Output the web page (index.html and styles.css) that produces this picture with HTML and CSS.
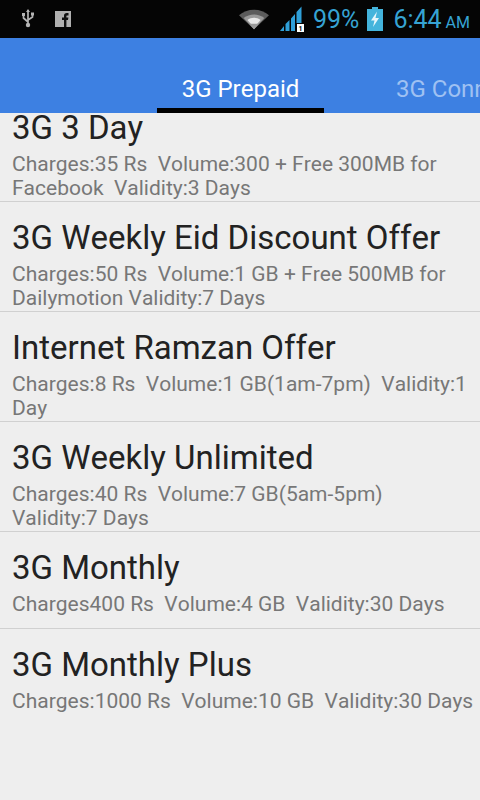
FILE: index.html
```html
<!DOCTYPE html>
<html>
<head>
<meta charset="utf-8">
<link rel="stylesheet" href="styles.css">
</head>
<body>
<div class="status">
  <div class="status-left">
    <svg class="ic-usb" width="16" height="20" viewBox="0 0 16 20"><path d="M8 1 L8 16 M8 13 L3.5 9 L3.5 6.5 M8 11 L12.5 8 L12.5 6" stroke="#b4b4b4" stroke-width="1.7" fill="none"/><circle cx="8" cy="16" r="2.2" fill="#b4b4b4"/><rect x="2" y="4" width="3" height="3" fill="#b4b4b4"/><rect x="11" y="3.5" width="3" height="3" fill="#b4b4b4"/><path d="M6 3 L8 0 L10 3Z" fill="#b4b4b4"/></svg>
    <svg class="ic-fb" width="16" height="16" viewBox="0 0 16 16"><rect width="16" height="16" fill="#b0b0b0"/><path d="M9 16 V9 H7 V6.5 H9 V4.8 C9 3 10 2 11.8 2 H13.5 V4.5 H12.3 C11.6 4.5 11.4 4.8 11.4 5.4 V6.5 H13.4 L13 9 H11.4 V16Z" fill="#111"/></svg>
  </div>
  <div class="status-right">
    <svg class="ic-wifi" width="30" height="22" viewBox="0 0 32 22"><path d="M0 7 C8 -1 24 -1 32 7 L16 22Z" fill="#5c5c5c"/><path d="M5 10 C11 5 21 5 27 10 L16 22Z" fill="#9a9a9a"/><path d="M9 12 C13 9 19 9 23 12 L16 20Z" fill="#e8e8e8"/><path d="M11 16 H21 L16 22Z" fill="#9a9a9a"/></svg>
    <svg class="ic-signal" width="26" height="26" viewBox="0 0 26 26"><path d="M1 25 L5 25 L5 20 Z M6.5 25 V18 L10.5 14 V25 Z M12 25 V12.500 L16 8 V25 Z M17.500 19 V6 L22.500 0.500 V17 H17.500 Z" fill="#2f9fd8"/><rect x="18" y="18" width="7" height="8" fill="#fff"/><text class="sim" x="19.500" y="25">1</text></svg>
    <span class="pct">99%</span>
    <svg class="ic-batt" width="16" height="24" viewBox="0 0 16 24"><path d="M5 0 H11 V2 H16 V24 H0 V2 H5Z" fill="#44b4dc"/><path d="M10 4.500 L4 13.500 H7.500 L6 20 L12 11 H8.500Z" fill="#e6f6fb"/></svg>
    <span class="clock">6:44<span class="ampm"> AM</span></span>
  </div>
</div>
<div class="tabs">
  <div class="tab tab-active">3G Prepaid</div>
  <div class="tab tab-next">3G Connect</div>
</div>
<div class="list">
  <div class="item item-first">
    <div class="title">3G 3 Day</div>
    <div class="desc">Charges:35 Rs&nbsp; Volume:300 + Free 300MB for<br>Facebook&nbsp; Validity:3 Days</div>
  </div>
  <div class="item">
    <div class="title">3G Weekly Eid Discount Offer</div>
    <div class="desc">Charges:50 Rs&nbsp; Volume:1 GB + Free 500MB for<br>Dailymotion Validity:7 Days</div>
  </div>
  <div class="item">
    <div class="title">Internet Ramzan Offer</div>
    <div class="desc">Charges:8 Rs&nbsp; Volume:1 GB(1am-7pm)&nbsp; Validity:1<br>Day</div>
  </div>
  <div class="item">
    <div class="title">3G Weekly Unlimited</div>
    <div class="desc">Charges:40 Rs&nbsp; Volume:7 GB(5am-5pm)<br>Validity:7 Days</div>
  </div>
  <div class="item">
    <div class="title">3G Monthly</div>
    <div class="desc">Charges400 Rs&nbsp; Volume:4 GB&nbsp; Validity:30 Days</div>
  </div>
  <div class="item item-last">
    <div class="title">3G Monthly Plus</div>
    <div class="desc">Charges:1000 Rs&nbsp; Volume:10 GB&nbsp; Validity:30 Days</div>
  </div>
</div>
</body>
</html>
```
FILE: styles.css
```css
* { box-sizing: border-box; }
html, body { margin: 0; padding: 0; }
body {
  width: 480px;
  height: 800px;
  overflow: hidden;
  background: #eeeeee;
  font-family: Roboto, "Liberation Sans", sans-serif;
  font-kerning: none;
  font-variant-ligatures: none;
}
.status {
  height: 38px;
  background: #050505;
  display: flex;
  justify-content: space-between;
  align-items: center;
  padding: 0 10px 0 20px;
}
.status-left { display: flex; align-items: center; gap: 19px; }
.status-right { display: flex; align-items: center; }
.ic-wifi { margin-right: 10px; }
.ic-signal { margin-right: 8px; }
.sim { font-size: 7px; font-weight: 700; fill: #000; }
.pct { font-size: 25px; color: #36a3d3; margin-right: 8px; }
.ic-batt { margin-right: 10px; }
.clock { font-size: 25px; color: #36a3d3; white-space: nowrap; }
.ampm { font-size: 16px; }
.tabs {
  height: 75px;
  background: #3d80e2;
  display: flex;
  padding-left: 157px;
  overflow: hidden;
}
.tab {
  height: 75px;
  font-size: 24px;
  line-height: 24px;
  padding-top: 39px;
  text-align: center;
  white-space: nowrap;
  flex: none;
}
.tab-active {
  width: 167px;
  color: #fff;
  border-bottom: 5px solid #000;
}
.tab-next {
  margin-left: 72px;
  color: #9fc1f2;
}
.list { height: 687px; overflow: hidden; }
.item {
  height: 110px;
  padding: 0 0 0 12px;
  border-bottom: 1px solid #d0d0d0;
}
.item-first { height: 89px; display: flow-root; }
.item-first .title { margin-top: -21px; }
.item:nth-child(5) { height: 97px; }
.item-last { border-bottom: none; }
.title {
  font-size: 33px;
  line-height: 40px;
  color: #222222;
  padding-top: 16px;
  height: 56px;
  white-space: nowrap;
}
.desc {
  font-size: 21px;
  line-height: 24px;
  color: #777777;
  margin-top: 4px;
  white-space: nowrap;
}
```
